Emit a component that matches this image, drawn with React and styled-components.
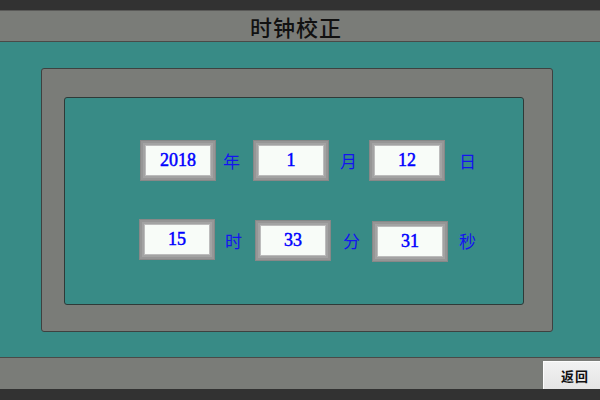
import styled, { createGlobalStyle } from "styled-components";

const GlobalStyle = createGlobalStyle`
  html, body {
    margin: 0;
    padding: 0;
    width: 600px;
    height: 400px;
    overflow: hidden;
    background: #323232;
  }
`;

const Screen = styled.div`
  width: 600px;
  height: 400px;
  display: flex;
  flex-direction: column;
  background: #323232;
  font-family: "Noto Sans CJK SC", "Noto Sans", sans-serif;
`;

const TopStrip = styled.div`
  height: 10px;
  flex: none;
  background: #323232;
`;

const TitleBar = styled.div`
  height: 30px;
  flex: none;
  display: flex;
  align-items: center;
  justify-content: center;
  background: #7a7c78;
  border-top: 1px solid #5a5a58;
  border-bottom: 1px solid #4a4a48;
`;

const Title = styled.h1`
  margin: 0 0 0 -8px;
  font-size: 22px;
  font-weight: 500;
  color: #111;
  letter-spacing: 1px;
`;

const Main = styled.div`
  flex: 1;
  background: #388b86;
  padding: 26px 47px 25px 41px;
`;

const OuterFrame = styled.div`
  height: 100%;
  box-sizing: border-box;
  background: #7a7c78;
  border: 1px solid #3e4140;
  border-radius: 3px;
  padding: 28px 28px 26px 22px;
`;

const InnerPanel = styled.div`
  height: 100%;
  box-sizing: border-box;
  background: #388b86;
  border: 1px solid #2e3a38;
  border-radius: 3px;
  padding: 42px 0 0 75px;
  display: flex;
  flex-direction: column;
  gap: 38px;
`;

const Row = styled.div`
  display: flex;
  align-items: center;
  margin-left: ${({ $shift }) => $shift || 0}px;
`;

const Field = styled.div`
  width: 76px;
  height: 41px;
  flex: none;
  box-sizing: border-box;
  padding: 6px;
  margin-left: ${({ $ml }) => $ml || 0}px;
  margin-top: ${({ $dy }) => $dy || 0}px;
  background: #a3a3a3;
  box-shadow: inset 0 0 0 1px #888888, inset 0 0 0 3px #969696;
`;

const FieldValue = styled.div`
  height: 100%;
  display: flex;
  align-items: center;
  justify-content: center;
  background: #f8fcf8;
  box-shadow: 0 0 0 1px #bcbcbc;
  color: #0000ff;
  font-family: "Liberation Serif", serif;
  font-size: 18px;
  -webkit-text-stroke: 0.5px #0000ff;
`;

const Unit = styled.span`
  margin-left: ${({ $ml }) => $ml || 0}px;
  color: #1414f0;
  font-size: 17px;
  line-height: 1;
`;

const BottomBar = styled.div`
  height: 31px;
  flex: none;
  display: flex;
  justify-content: flex-end;
  align-items: flex-end;
  background: #7a7c78;
  border-top: 1px solid #4a4a48;
`;

const ReturnButton = styled.button`
  width: 57px;
  height: 28px;
  padding: 0 0 0 6px;
  border: none;
  border-left: 1px solid #fdfdfd;
  border-top: 1px solid #fdfdfd;
  background: linear-gradient(#f2f2f2, #e4e4e4);
  color: #111;
  font-family: "Noto Sans CJK SC", sans-serif;
  font-weight: 700;
  font-size: 13px;
  letter-spacing: 1px;
`;

const BottomStrip = styled.div`
  height: 11px;
  flex: none;
  background: #323232;
`;

const rows = [
  {
    shift: 0,
    items: [
      { value: "2018", unit: "年", gap: 0, unitGap: 7 },
      { value: "1", unit: "月", gap: 13, unitGap: 11 },
      { value: "12", unit: "日", gap: 12, unitGap: 14 },
    ],
  },
  {
    shift: -1,
    items: [
      { value: "15", unit: "时", gap: 0, unitGap: 10, dy: -2 },
      { value: "33", unit: "分", gap: 13, unitGap: 12 },
      { value: "31", unit: "秒", gap: 12, unitGap: 11, dy: 2 },
    ],
  },
];

const App = () => {
  return (
    <Screen>
      <GlobalStyle />
      <TopStrip />
      <TitleBar>
        <Title>时钟校正</Title>
      </TitleBar>
      <Main>
        <OuterFrame>
          <InnerPanel>
            {rows.map((row, rowIndex) => (
              <Row key={rowIndex} $shift={row.shift}>
                {row.items.map((item) => [
                  <Field key={item.unit + "-f"} $ml={item.gap} $dy={item.dy}>
                    <FieldValue>{item.value}</FieldValue>
                  </Field>,
                  <Unit key={item.unit} $ml={item.unitGap}>
                    {item.unit}
                  </Unit>,
                ])}
              </Row>
            ))}
          </InnerPanel>
        </OuterFrame>
      </Main>
      <BottomBar>
        <ReturnButton>返回</ReturnButton>
      </BottomBar>
      <BottomStrip />
    </Screen>
  );
};

export default App;
